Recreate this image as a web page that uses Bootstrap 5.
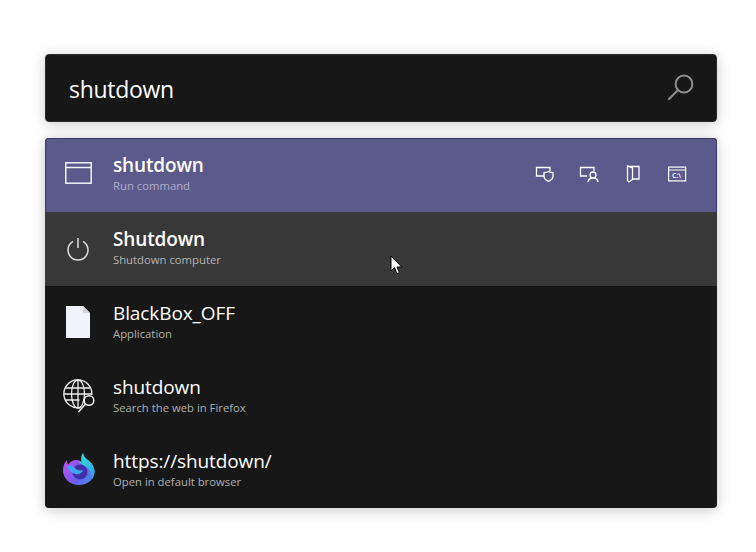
<!DOCTYPE html>
<html lang="en">
<head>
<meta charset="utf-8">
<title>PowerToys Run</title>
<link href="https://cdn.jsdelivr.net/npm/bootstrap@5.3.0/dist/css/bootstrap.min.css" rel="stylesheet">
<style>
html,body{height:100%;background:#fff;overflow:hidden}
body{font-family:"Open Sans","Noto Sans",sans-serif}
.stage{padding:54px 39px 0 45px;width:756px}
.searchbar{height:68px;background:#171717;border-radius:4px;padding:0 21px 0 23px;box-shadow:0 2px 14px rgba(0,0,0,.22);border:1px solid #2c2c2c;color:#fff;font-size:23px;letter-spacing:-.3px}
.searchtext{margin-top:3px}
.searchglass{margin-bottom:2px}
.results{margin-top:16px;background:#171717;border-radius:4px;box-shadow:0 2px 14px rgba(0,0,0,.22);overflow:hidden}
.rowitem{height:74px;padding:0 30px 4px 15px;color:#fff}
.rowitem.sel{background:#5c5a8c;border:1px solid #3b3966;border-bottom:0;border-radius:4px 4px 0 0;padding:0 29px 4px 14px}
.rowitem.hov{background:#383838}
.ico{width:37px;margin-right:16px;flex:none}
.winico{margin-bottom:2px}
.sel .txt{margin-bottom:2px}
.powerico{margin:4px 1px 0 0}
.fileico{margin:2px 2px 0 0}
.globeico{margin-top:2px}
.ttl{font-size:19px;line-height:24px;letter-spacing:-.1px}
.ttl.semi{font-weight:600;letter-spacing:-.15px}
.sub{font-size:11.3px;line-height:15px;color:#b0b0b0;margin-top:1px}
.sel .sub{color:#aeacc9}
.hov .sub{color:#b4b4b4}
.acts{gap:24px;margin-left:auto}
.acts svg{display:block}
.termtext{font:600 7px "Open Sans",sans-serif;fill:#fff;stroke:none}
.cursor{position:absolute;left:390px;top:255px}
</style>
</head>
<body>
<div class="stage">
  <div class="searchbar d-flex align-items-center justify-content-between">
    <span class="searchtext">shutdown</span>
    <svg class="searchglass" width="28" height="28" viewBox="0 0 28 28" fill="none" stroke="#8e8e8e" stroke-width="2"><circle cx="17" cy="11" r="8.4"/><path d="M11 17 2 26" stroke-linecap="round" stroke-width="2.2"/></svg>
  </div>
  <div class="results">
    <div class="rowitem sel d-flex align-items-center">
      <div class="ico d-flex justify-content-center">
        <svg class="winico" width="27" height="22" viewBox="0 0 27 22" fill="none" stroke="#f3f3f8" stroke-width="1.5"><rect x=".8" y=".8" width="25.4" height="20.4"/><path d="M1 5.500h25"/></svg>
      </div>
      <div class="txt">
        <div class="ttl semi">shutdown</div>
        <div class="sub">Run command</div>
      </div>
      <div class="acts d-flex align-items-center">
        <svg width="20" height="18" viewBox="0 0 20 18" fill="none" stroke="#fff" stroke-width="1.3"><path d="M9 11H1.500V2.500H15V6"/><path d="M13.500 6.500c1.400 1 2.600 1.200 4.500 1.200v3.600c0 2.400-2 4-4.500 5-2.500-1-4.500-2.600-4.500-5V7.700c1.900 0 3.100-.2 4.500-1.200z"/></svg>
        <svg width="20" height="18" viewBox="0 0 20 18" fill="none" stroke="#fff" stroke-width="1.3"><path d="M8 11H1.500V2.500H15V6"/><circle cx="14" cy="10" r="3"/><path d="M9 17c.3-2.400 2.300-4 5-4s4.700 1.600 5 4"/></svg>
        <svg width="20" height="18" viewBox="0 0 20 18" fill="none" stroke="#fff" stroke-width="1.3"><path d="M6 1.500h10V14H10"/><path d="M4.500.8 9.500 3v11.500L6 17 4.500 15.500z"/></svg>
        <svg width="20" height="18" viewBox="0 0 20 18" fill="none" stroke="#fff" stroke-width="1.2"><rect x="1.600" y="2.100" width="17" height="13.800"/><path d="M2 5h16.500"/><text class="termtext" x="5" y="13">C:\</text></svg>
      </div>
    </div>
    <div class="rowitem hov d-flex align-items-center">
      <div class="ico d-flex justify-content-center">
        <svg class="powerico" width="24" height="24" viewBox="0 0 24 24" fill="none" stroke="#dcdcdc" stroke-width="1.5"><path d="M7 4.400a10 10 0 1 0 10 0"/><path d="M12 1v10"/></svg>
      </div>
      <div class="txt">
        <div class="ttl semi">Shutdown</div>
        <div class="sub">Shutdown computer</div>
      </div>
    </div>
    <div class="rowitem d-flex align-items-center">
      <div class="ico d-flex justify-content-center">
        <svg class="fileico" width="24" height="32" viewBox="0 0 24 32"><path d="M0 0h17l7 7v25H0z" fill="#f3f3fb"/><path d="M17 0l7 7h-7z" fill="#d4d4de"/></svg>
      </div>
      <div class="txt">
        <div class="ttl">BlackBox_OFF</div>
        <div class="sub">Application</div>
      </div>
    </div>
    <div class="rowitem d-flex align-items-center">
      <div class="ico d-flex justify-content-center">
        <svg class="globeico" width="32" height="34" viewBox="0 0 32 34" fill="none" stroke="#f0f0f0" stroke-width="1.3"><path d="M18 28.500A14 14 0 1 1 28.800 16"/><ellipse cx="15" cy="15" rx="6.500" ry="14"/><path d="M15 1v28M2.500 9h25M1 15h28M2.500 21h14"/><circle cx="26" cy="21.500" r="4.800" stroke-width="1.500"/><path d="M22.500 25 15.500 33" stroke-width="1.500"/></svg>
      </div>
      <div class="txt">
        <div class="ttl">shutdown</div>
        <div class="sub">Search the web in Firefox</div>
      </div>
    </div>
    <div class="rowitem d-flex align-items-center">
      <div class="ico d-flex justify-content-center">
        <svg width="34" height="34" viewBox="0 0 34 34">
          <defs>
            <linearGradient id="fx" x1="0" y1=".3" x2="1" y2="1"><stop offset="0" stop-color="#c050e8"/><stop offset=".55" stop-color="#6a5cf0"/><stop offset="1" stop-color="#3a9cf0"/></linearGradient>
            <linearGradient id="fy" x1="0" y1="0" x2="1" y2="1"><stop offset="0" stop-color="#30e6c8"/><stop offset="1" stop-color="#2f9cf0"/></linearGradient>
          </defs>
          <path d="M21 1c.5 3 2 5 5 7 4 3 6.500 7 6.500 11.500C32.500 27.500 25.500 33 17 33S1 27 1 18.500C1 14 2.500 10.500 5 8c0 2 .5 3.500 1.500 4.500C8 9.500 11 8 14 8c2.500 0 4 .5 5 1.500C19 6 19.500 3 21 1z" fill="url(#fx)"/>
          <path d="M21 1c.5 3 2 5 5 7 4 3 6.500 7 6.500 11.500 0 3-1 5.500-2.500 7.500.2-5-2-9-5-11.500-3-2.500-6-3-8-5.500 2-.5 2 0 3 .5C19 6 19.500 3 21 1z" fill="url(#fy)"/>
          <circle cx="18" cy="20" r="7.500" fill="#3f30a8"/>
          <path d="M5 15c3-3 6-1 8 1 2 2.500 5 3 8 2-1 3-4 5-7.500 4C10 21 7 18.500 5 15z" fill="#3fa3f2"/>
        </svg>
      </div>
      <div class="txt">
        <div class="ttl">https://shutdown/</div>
        <div class="sub">Open in default browser</div>
      </div>
    </div>
  </div>
</div>
<svg class="cursor" width="13" height="20" viewBox="0 0 13 20"><path d="M1 1v15l3.500-3.300 2.500 6 2.500-1-2.500-5.700h4.800z" fill="#fff" stroke="#000" stroke-width="1"/></svg>
</body>
</html>
